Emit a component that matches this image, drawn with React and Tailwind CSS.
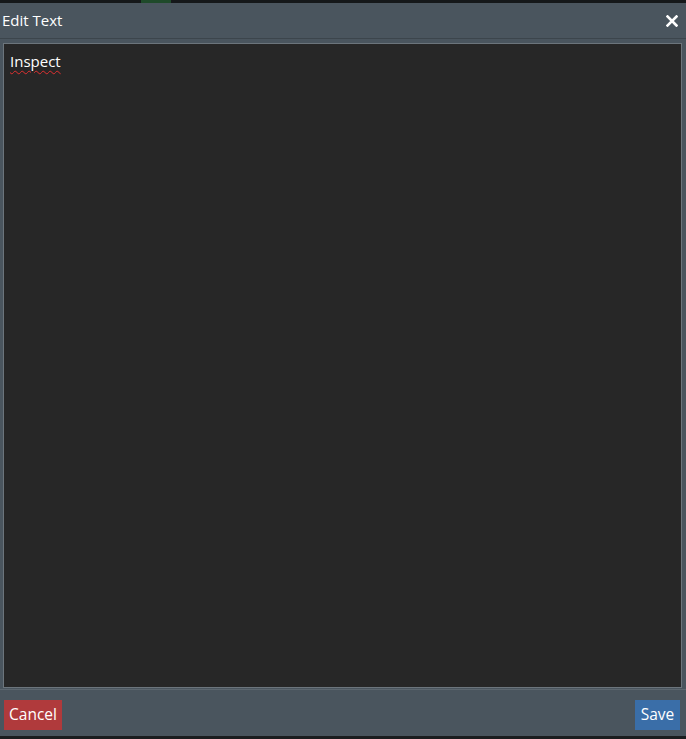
export default function App() {
  return (
    <div
      className="w-[686px] h-[739px] flex flex-col bg-[#1b1d1f] overflow-hidden"
      style={{ fontFamily: '"Segoe UI", "Open Sans", "Noto Sans", sans-serif' }}
    >
      <div className="h-[3px] flex shrink-0 bg-[#15181a]">
        <div className="w-[141px]" />
        <div className="w-[30px] bg-[#1f4a2a]" />
      </div>
      <div className="h-[35px] shrink-0 bg-[#4a555e] flex items-center justify-between pl-[2px] pr-[8px]">
        <span className="text-white text-[15px] leading-none">Edit Text</span>
        <svg width="12" height="12" viewBox="0 0 12 12">
          <path d="M1.5 1.5 L10.5 10.5 M10.5 1.5 L1.5 10.5" stroke="#fff" strokeWidth="2.6" strokeLinecap="square" />
        </svg>
      </div>
      <div className="h-[1px] shrink-0 bg-[#3c454c]" />
      <div className="flex-1 bg-[#4a555e] pt-[4px] pl-[3px] pr-[4px] pb-[1px] flex flex-col">
        <div className="flex-1 border border-[#6c757c] bg-[#272727] px-[6px] pt-[5px]">
          <span
            className="text-white text-[15px] underline decoration-wavy decoration-[#e03030] underline-offset-[3px] decoration-[1px]"
          >
            Inspect
          </span>
        </div>
      </div>
      <div className="h-[1px] shrink-0 bg-[#5d676f]" />
      <div className="h-[46px] shrink-0 bg-[#4a555e] flex items-start justify-between pt-[10px] pl-[4px] pr-[6px]">
        <button className="h-[30px] w-[58px] bg-[#b03a3c] text-white text-[15.5px] leading-none">Cancel</button>
        <button className="h-[30px] w-[45px] bg-[#3a6ea8] text-white text-[15.5px] leading-none">Save</button>
      </div>
      <div className="h-[3px] shrink-0 bg-[#1b1d1f]" />
    </div>
  );
}
